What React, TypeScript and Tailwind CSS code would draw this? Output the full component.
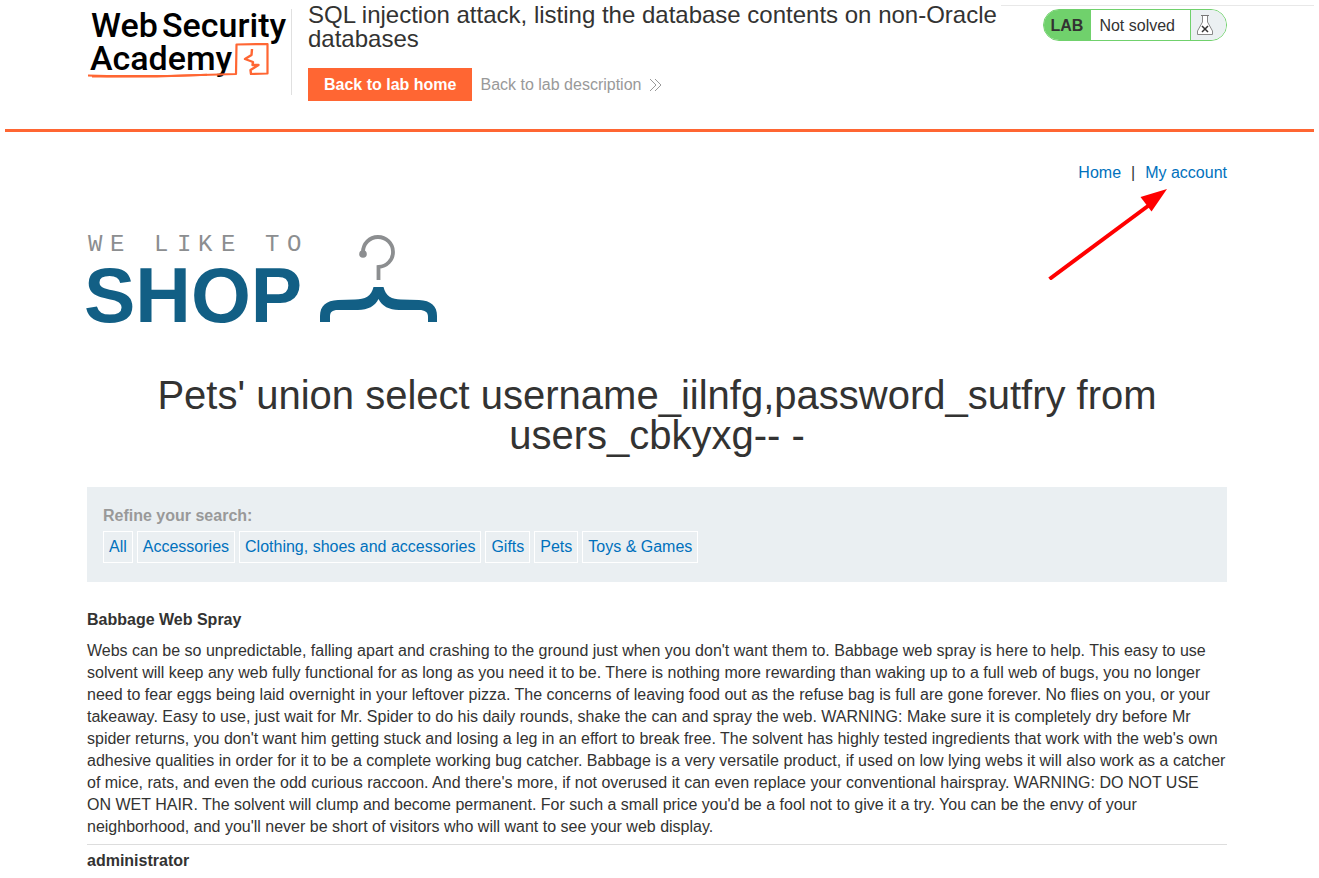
const categories = ['All', 'Accessories', 'Clothing, shoes and accessories', 'Gifts', 'Pets', 'Toys & Games'];

const products = [
  {
    name: 'Babbage Web Spray',
    description:
      "Webs can be so unpredictable, falling apart and crashing to the ground just when you don't want them to. Babbage web spray is here to help. This easy to use solvent will keep any web fully functional for as long as you need it to be. There is nothing more rewarding than waking up to a full web of bugs, you no longer need to fear eggs being laid overnight in your leftover pizza. The concerns of leaving food out as the refuse bag is full are gone forever. No flies on you, or your takeaway. Easy to use, just wait for Mr. Spider to do his daily rounds, shake the can and spray the web. WARNING: Make sure it is completely dry before Mr spider returns, you don't want him getting stuck and losing a leg in an effort to break free. The solvent has highly tested ingredients that work with the web's own adhesive qualities in order for it to be a complete working bug catcher. Babbage is a very versatile product, if used on low lying webs it will also work as a catcher of mice, rats, and even the odd curious raccoon. And there's more, if not overused it can even replace your conventional hairspray. WARNING: DO NOT USE ON WET HAIR. The solvent will clump and become permanent. For such a small price you'd be a fool not to give it a try. You can be the envy of your neighborhood, and you'll never be short of visitors who will want to see your web display.",
  },
];

function AcademyLogo() {
  return (
    <svg width="204" height="86" viewBox="0 0 204 86" className="shrink-0 overflow-visible">
      <g className="font-['Roboto',sans-serif] text-[34px] font-medium" fill="#000">
        <text x="4" y="28">Web</text>
        <text x="75" y="28">Security</text>
        <text x="3" y="61">Academy</text>
      </g>
      <g fill="none" stroke="#ff6633" strokeLinejoin="round">
        <path d="M1 66.500L20 67.200L80 67L149 65L149.500 35.500L180.500 35L180.500 64.500L163 65" strokeWidth="2.200" />
        <path d="M5 67.500L70 67.500L120 65.800" strokeWidth="2" />
        <path d="M165 40L164.500 46L158 50L166 53L165.500 56L171.500 56L163.500 61L164 65" strokeWidth="2.400" />
      </g>
    </svg>
  );
}

function ShopLogo() {
  return (
    <svg width="352" height="94" viewBox="0 0 352 94" className="block overflow-visible">
      <text
        x="1 23 45 67 90 111 134 156 178 200"
        y="17"
        xmlSpace="preserve"
        className="font-['Liberation_Mono',monospace] text-[24px]"
        fill="#8c8e90"
      >
        WE LIKE TO
      </text>
      <text x="-3" y="88" className="font-['Liberation_Sans',sans-serif] text-[77px] font-bold" fill="#125f85">
        SHOP
      </text>
      <circle cx="276" cy="20" r="3.800" fill="#8c8e90" />
      <path d="M276 20V18A15 15 0 1 1 291.500 33H291.500V46" fill="none" stroke="#8c8e90" strokeWidth="3.800" />
      <path
        d="M286.500 53H296.500C298.500 62 305 65.500 314 65.500L332 66C344 66.500 350 72 350 82V88H341V83C341 78 338 76 332 76H312C302 76 295 72 291.500 65C288 72 281 76 271 76H251C245 76 243 78 243 83V88H233V82C233 72 239 66.500 251 66L268 65.500C278 65.500 284.500 62 286.500 53Z"
        fill="#125f85"
      />
    </svg>
  );
}

function Flask() {
  return (
    <svg width="18" height="22" viewBox="0 0 18 22" fill="none">
      <path d="M6.500 1.500V8L1.500 17V20.500H16.500V17L11.500 8V1.500Z" fill="#fff" stroke="#888" />
      <path d="M5 1.500H13" stroke="#777" />
      <path d="M6 12L12 18M12 12L6 18" stroke="#333" strokeWidth="1.500" />
    </svg>
  );
}

function Header() {
  return (
    <header className="relative ml-[5px] border-b-[3px] border-[#ff6633]">
      <div className="absolute top-[5px] right-0 w-[313px] border-t border-[#e8e8e8]" />
      <div className="-ml-[5px]">
        <div className="mx-auto flex h-[129px] max-w-[1140px] items-start">
          <a href="#academy" aria-label="Web Security Academy" className="mt-[9px] shrink-0 border-r border-[#e0e0e0]">
            <AcademyLogo />
          </a>
          <div className="ml-4 max-w-[720px] flex-1 pt-[3px]">
            <h2 className="text-2xl leading-6">
              SQL injection attack, listing the database contents on non-Oracle databases
            </h2>
            <div className="mt-[17px] flex items-center gap-2">
              <a href="#lab" className="bg-[#ff6633] px-4 text-base leading-[33px] font-bold text-white">
                Back to lab home
              </a>
              <a href="#description" className="flex items-center gap-2 text-[#999]">
                Back to lab description
                <svg width="13" height="14" viewBox="0 0 13 14" fill="none" stroke="#999">
                  <path d="M1 1L7 7L1 13M6 1L12 7L6 13" />
                </svg>
              </a>
            </div>
          </div>
          <div className="mt-[9px] ml-auto flex h-8 overflow-hidden rounded-full border border-[#70d16c] leading-8">
            <span className="bg-[#70d16c] px-2 pl-[7px] font-bold">LAB</span>
            <span className="bg-white pr-[15px] pl-2">Not solved</span>
            <span className="flex w-9 items-center border-l border-[#70d16c] bg-[#ebf0f2] pl-[5px]">
              <Flask />
            </span>
          </div>
        </div>
      </div>
    </header>
  );
}

export default function App() {
  return (
    <div className="bg-white pr-[5px] font-['Liberation_Sans',Arial,sans-serif] text-base leading-[22px] text-[#333332]">
      <Header />
      <main className="mx-auto max-w-[1140px] pt-[30px]">
        <nav className="relative flex justify-end gap-[10px]">
          <a href="#home" className="text-[#0071bd]">Home</a>
          <span>|</span>
          <a href="#account" className="text-[#0071bd]">My account</a>
          <svg width="120" height="92" viewBox="0 0 120 92" className="pointer-events-none absolute top-[26px] right-[59px]">
            <path d="M1.500 91L102 16.500" stroke="#f00" strokeWidth="4" />
            <path d="M119 1L92.500 9L103.500 23.500Z" fill="#f00" />
          </svg>
        </nav>
        <section className="mt-[50px]">
          <ShopLogo />
        </section>
        <h1 className="mt-[47px] text-center text-[40px] leading-10">
          Pets' union select username_iilnfg,password_sutfry from users_cbkyxg-- -
        </h1>
        <section className="mt-8 bg-[#eaeff2] px-4 pt-[18px] pb-[19px]">
          <p className="font-bold text-[#999]">Refine your search:</p>
          <div className="mt-1 flex flex-wrap gap-1">
            {categories.map((c) => (
              <a key={c} href="#filter" className="border border-white px-[5px] leading-[30px] text-[#0071bd]">
                {c}
              </a>
            ))}
          </div>
        </section>
        <table className="mt-[23px] w-full border-collapse">
          <tbody>
            {products.map((p) => (
              <tr key={p.name} className="border-b border-[#ddd] text-left">
                <td className="pt-1 pb-[6px]">
                  <h3 className="mb-[9px] font-bold">{p.name}</h3>
                  <p>{p.description}</p>
                </td>
              </tr>
            ))}
            <tr className="text-left">
              <th scope="row" className="pt-[5px] font-bold">administrator</th>
            </tr>
          </tbody>
        </table>
      </main>
    </div>
  );
}
